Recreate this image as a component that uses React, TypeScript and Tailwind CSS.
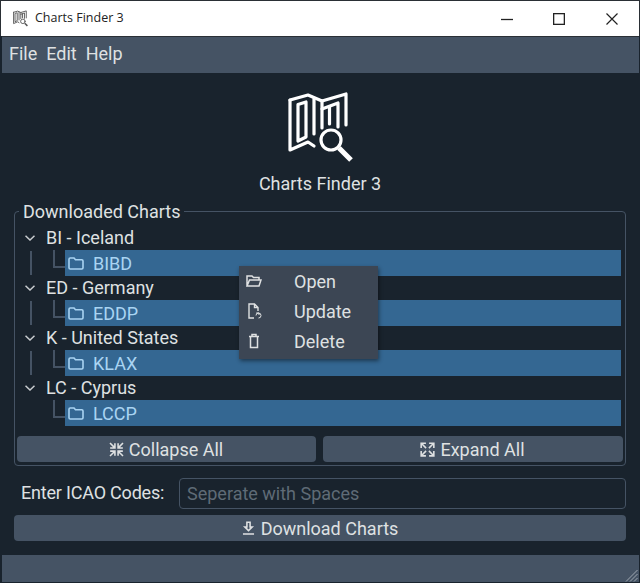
import React from "react";

const P = ({ d, size, className }: { d: string; size: number; className?: string }) => (
  <svg width={size} height={size} viewBox="0 0 24 24" fill="currentColor" className={className}>
    <path d={d} />
  </svg>
);

const COLLAPSE = "M19.5,3.09L20.91,4.5L16.41,9H20V11H13V4H15V7.59L19.5,3.09M20.91,19.5L19.5,20.91L15,16.41V20H13V13H20V15H16.41L20.91,19.5M4.5,3.09L9,7.59V4H11V11H4V9H7.59L3.09,4.5L4.5,3.09M3.09,19.5L7.59,15H4V13H11V20H9V16.41L4.5,20.91L3.09,19.5Z";
const EXPAND = "M9.5,13.09L10.91,14.5L6.41,19H10V21H3V14H5V17.59L9.5,13.09M10.91,9.5L9.5,10.91L5,6.41V10H3V3H10V5H6.41L10.91,9.5M14.5,13.09L19,17.59V14H21V21H14V19H17.59L13.09,14.5L14.5,13.09M13.09,9.5L17.59,5H14V3H21V10H19V6.41L14.5,10.91L13.09,9.5Z";
const DOWNLOAD = "M13,5V11H14.17L12,13.17L9.83,11H11V5H13M15,3H9V9H5L12,16L19,9H15V3M19,18H5V20H19V18Z";

const Logo = ({ size, color, sw }: { size: number; color: string; sw: number }) => (
  <svg width={size} height={size} viewBox="0 0 75 75" fill="none" stroke={color} strokeWidth={sw} strokeLinejoin="round" strokeLinecap="round">
    <path d="M7 10 L25 5 L39 11 L63 4 V35" />
    <path d="M7 10 V60 L25 52 L31 56" />
    <path d="M15 14.5 L23 12 V47 L15 51 Z" />
    <path d="M31 9 V44" />
    <path d="M39 19 L55 13 V37" />
    <path d="M46.5 17 V34" />
    <path d="M39 11 V38" />
    <circle cx="48" cy="50" r="10" />
    <path d="M56 58 L68 70" strokeWidth={sw * 1.6} strokeLinecap="butt" />
  </svg>
);

const Chevron = () => (
  <svg width="10" height="6" viewBox="0 0 10 6" fill="none" stroke="#c9cdd0" strokeWidth="1.5">
    <path d="M.5 .7 L5 5 L9.5 .7" />
  </svg>
);

const FolderIcon = () => (
  <svg width="16" height="13" viewBox="0 0 16 13" fill="none" stroke="#a9d4f2" strokeWidth="1.6">
    <path d="M1 2.2 Q1 1 2.2 1 H6 L7.5 2.8 H13.8 Q15 2.8 15 4 V10.8 Q15 12 13.8 12 H2.2 Q1 12 1 10.8 Z" />
  </svg>
);

const TreeGroup = ({ name, code, line }: { name: string; code: string; line: boolean }) => (
  <div className="flex flex-col">
    <div className="h-[24px] flex items-center">
      <div className="w-[29px] pl-[8px] flex items-center"><Chevron /></div>
      <span className="text-[18px] leading-[24px] text-[#dfe1e2]">{name}</span>
    </div>
    <div className="h-[26px] flex">
      <div className="w-[15px] shrink-0 pl-[13px] py-[1px]">
        {line && <div className="w-[2px] h-full bg-[#455364]" />}
      </div>
      <div className="w-[12px] shrink-0 ml-[21px]">
        <div className="w-[12px] h-[18px] border-l-2 border-b-2 border-[#455364]" />
      </div>
      <div className="flex-1 bg-[#346792] flex items-center pl-[3px] gap-[9px]">
        <FolderIcon />
        <span className="text-[18px] text-[#a9d4f2]">{code}</span>
      </div>
    </div>
  </div>
);

const MenuItem = ({ icon, label }: { icon: React.ReactNode; label: string }) => (
  <div className="h-[30px] flex items-center">
    <div className="w-[55px] pl-[7px] flex items-center">{icon}</div>
    <span className="text-[18px] text-[#dfe1e2]">{label}</span>
  </div>
);

const Btn = ({ d, label, className }: { d: string; label: string; className: string }) => (
  <button className={"h-[26px] rounded-[4px] bg-[#455364] flex items-center justify-center gap-[3px] pr-[3px] text-[18px] text-[#dfe1e2] " + className}>
    <P d={d} size={19} />
    {label}
  </button>
);

export default function App() {
  return (
    <div
      className="relative w-[640px] h-[583px] flex flex-col bg-[#19232d] overflow-hidden border-t border-[#2a2f35]"
      style={{ fontFamily: "Roboto, sans-serif" }}
    >
      <div className="h-[35px] shrink-0 bg-white flex items-center pl-[11px] border-x border-[#2a2f35]">
        <Logo size={17} color="#555" sw={4} />
        <span className="ml-[6px] text-[12.5px] text-[#222]" style={{ fontFamily: "'Open Sans', sans-serif" }}>Charts Finder 3</span>
        <div className="ml-auto flex items-center">
          <svg width="12" height="12" viewBox="0 0 12 12" className="mr-[40px]" stroke="#222" strokeWidth="1.3"><path d="M0 6.5 H12" /></svg>
          <svg width="12" height="12" viewBox="0 0 12 12" fill="none" className="mr-[41px]" stroke="#222" strokeWidth="1.3"><rect x=".65" y=".65" width="10.7" height="10.7" /></svg>
          <svg width="12" height="12" viewBox="0 0 12 12" className="mr-[21px]" stroke="#222" strokeWidth="1.2"><path d="M.5 .5 L11.5 11.5 M11.5 .5 L.5 11.5" /></svg>
        </div>
      </div>
      <div className="h-[37px] shrink-0 ml-[2px] mr-[1px] border-t border-[#2a2f35] bg-[#455364] flex items-center pl-[7px] pb-[3px] gap-[9px] text-[18px] text-[#dfe1e2]">
        <span>File</span>
        <span>Edit</span>
        <span>Help</span>
      </div>

      <div className="flex-1 flex flex-col items-center">
        <div className="mt-[17px] h-[75px] flex justify-center w-full pl-[1px]">
          <Logo size={75} color="#ffffff" sw={3.2} />
        </div>
        <div className="mt-[8px] text-[18px] leading-[22px] text-[#dfe1e2]">Charts Finder 3</div>
      </div>

      <div className="shrink-0 flex flex-col">
        <div className="relative mx-[14px] h-[255px] border border-[#455364] rounded-[4px] px-[2px] pt-[14px]">
          <span className="absolute left-[4px] top-[-11px] px-[4px] bg-[#19232d] text-[18px] leading-[22px] text-[#dfe1e2]">Downloaded Charts</span>
          <div className="flex flex-col pr-[2px]">
            <TreeGroup name="BI - Iceland" code="BIBD" line />
            <TreeGroup name="ED - Germany" code="EDDP" line />
            <TreeGroup name="K - United States" code="KLAX" line />
            <TreeGroup name="LC - Cyprus" code="LCCP" line={false} />
          </div>
          <div className="mt-[10px] flex gap-[7px]">
            <Btn d={COLLAPSE} label="Collapse All" className="w-[299px]" />
            <Btn d={EXPAND} label="Expand All" className="flex-1" />
          </div>
        </div>

        <div className="mt-[12px] mx-[14px] flex items-center">
          <span className="w-[165px] shrink-0 pl-[7px] pb-[2px] text-[18px] tracking-[-0.2px] text-[#dfe1e2]">Enter ICAO Codes:</span>
          <div className="flex-1 h-[31px] border border-[#455364] rounded-[4px] flex items-center pl-[7px] pb-[1px] text-[18px] text-[#5f6b76]">
            Seperate with Spaces
          </div>
        </div>

        <Btn d={DOWNLOAD} label="Download Charts" className="mx-[14px] mt-[6px]" />

        <div className="relative mt-[14px] h-[27px] ml-[2px] mr-[1px] mb-[1px] bg-[#455364]">
          <svg width="13" height="13" viewBox="0 0 13 13" className="absolute right-[1px] bottom-0" stroke="#a0a8b0" strokeWidth="1">
            <path d="M12.5 1 L1 12.5 M12.5 5 L5 12.5 M12.5 9 L9 12.5" />
          </svg>
        </div>
      </div>

      <div className="absolute left-[239px] top-[265px] w-[139px] h-[93px] bg-[#3c4654] shadow-[1px_2px_4px_rgba(0,0,0,0.45)]">
        <MenuItem
          label="Open"
          icon={
            <svg width="16" height="14" viewBox="0 0 16 14" fill="none" stroke="#dfe1e2" strokeWidth="1.5">
              <path d="M1 12 V2 H6 L7.5 3.5 H13 V5.5 M1 12 L3.5 6 H15 L13 12 Z" />
            </svg>
          }
        />
        <MenuItem
          label="Update"
          icon={
            <svg width="16" height="16" viewBox="0 0 16 16" fill="none" stroke="#dfe1e2" strokeWidth="1.4">
              <path d="M8 15 H3 V1 H8.5 L12 4.5 V8 M8.5 1 V4.5 H12" />
              <path d="M10 12.5 A2.5 2.5 0 1 1 12.5 15 M10.2 10 H13 V12" strokeWidth="1" />
            </svg>
          }
        />
        <MenuItem
          label="Delete"
          icon={
            <svg width="16" height="16" viewBox="0 0 16 16" fill="none" stroke="#dfe1e2" strokeWidth="1.5">
              <path d="M3 3.5 H13 M6 3 V1.5 H10 V3 M4.5 3.5 V14.5 H11.5 V3.5" />
            </svg>
          }
        />
      </div>
    </div>
  );
}
